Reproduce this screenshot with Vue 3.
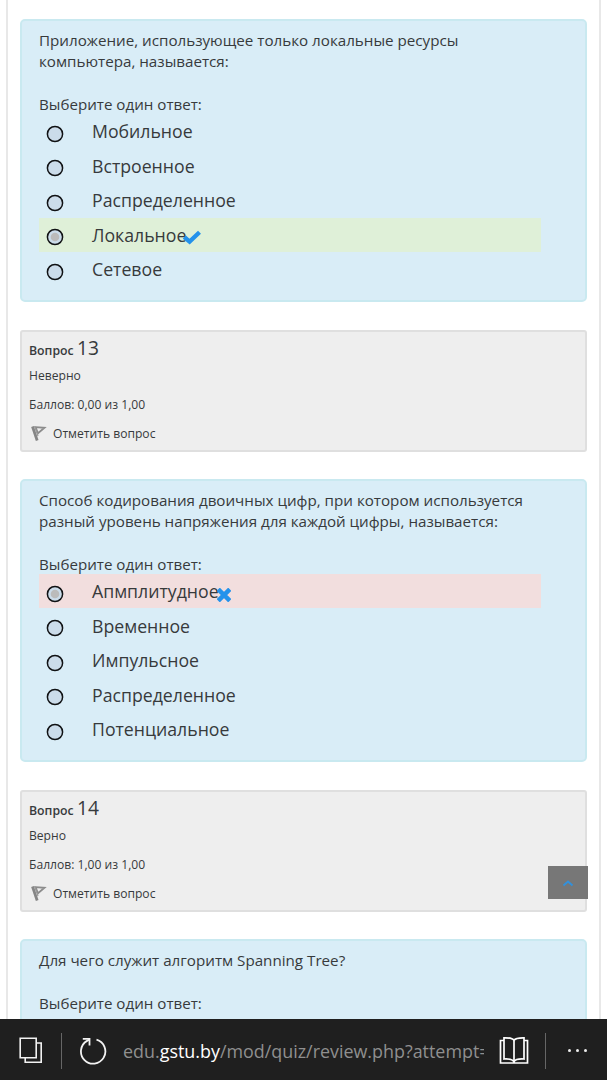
<script setup>
const blocks = [
  {
    id: 12,
    lines: ['Приложение, использующее только локальные ресурсы', 'компьютера, называется:'],
    options: [
      { text: 'Мобильное' },
      { text: 'Встроенное' },
      { text: 'Распределенное' },
      { text: 'Локальное', state: 'correct' },
      { text: 'Сетевое' },
    ],
  },
  {
    id: 13,
    info: { result: 'Неверно', grade: 'Баллов: 0,00 из 1,00' },
    lines: ['Способ кодирования двоичных цифр, при котором используется', 'разный уровень напряжения для каждой цифры, называется:'],
    options: [
      { text: 'Апмплитудное', state: 'incorrect' },
      { text: 'Временное' },
      { text: 'Импульсное' },
      { text: 'Распределенное' },
      { text: 'Потенциальное' },
    ],
  },
  {
    id: 14,
    info: { result: 'Верно', grade: 'Баллов: 1,00 из 1,00' },
    lines: ['Для чего служит алгоритм Spanning Tree?'],
    options: [],
  },
]
</script>

<template>
  <div class="screen">
    <main class="page">
      <template v-for="b in blocks" :key="b.id">
        <section v-if="b.info" class="info">
          <h3 class="number">Вопрос <span>{{ b.id }}</span></h3>
          <div class="result">{{ b.info.result }}</div>
          <div class="grade">{{ b.info.grade }}</div>
          <div class="flag">
            <svg width="16" height="17" viewBox="0 0 16 17" fill="none">
              <path d="M1.5 1.5 6.2 15.5" stroke="#858585" stroke-width="2.8" />
              <path d="M4.5 2.1 13.500 2.800 7 8.300Z" stroke="#8c8c8c" stroke-width="1.8" />
              <path d="M3.6 1.5 7 11" stroke="#999" stroke-width="1.2" />
            </svg>
            <span>Отметить вопрос</span>
          </div>
        </section>
        <section class="question">
          <p class="stem"><span v-for="l in b.lines" :key="l">{{ l }}</span></p>
          <div class="prompt">Выберите один ответ:</div>
          <div v-for="o in b.options" :key="o.text" class="option" :class="o.state">
            <svg class="radio" width="18" height="18" viewBox="0 0 18 18">
              <circle cx="9" cy="9" r="7.600" fill="#cbdcea" stroke="#101214" stroke-width="1.500" />
              <circle v-if="o.state" cx="9" cy="9" r="4.300" fill="#bbb" />
            </svg>
            <span class="label">{{ o.text }}</span>
            <svg v-if="o.state === 'correct'" class="mark check" width="20" height="15" viewBox="0 0 20 15">
              <path d="M2.200 7 7.600 11.600 17.500 2.200" fill="none" stroke="#2492eb" stroke-width="4.300" />
            </svg>
            <svg v-if="o.state === 'incorrect'" class="mark cross" width="14" height="14" viewBox="0 0 14 14">
              <path d="M2.800 2.800 11.200 11.200M11.200 2.800 2.800 11.200" fill="none" stroke="#2492eb" stroke-width="4.500" stroke-linecap="square" />
            </svg>
          </div>
        </section>
      </template>
    </main>

    <div class="to-top">
      <svg width="12" height="8" viewBox="0 0 12 8"><path d="M1.500 6.500 6 2.500 10.500 6.500" fill="none" stroke="#3290db" stroke-width="2" /></svg>
    </div>

    <footer class="bar">
      <svg class="tabs" width="24" height="27" viewBox="0 0 24 27" fill="none" stroke="#f2f2f2" stroke-width="1.600">
        <path d="M1.200 1.200H17.200V20.700H1.200Z" />
        <path d="M17.200 6H22.200V25.200H6.200V20.700" />
      </svg>
      <i class="divider"></i>
      <svg class="reload" width="28" height="28" viewBox="0 0 28 28" fill="none" stroke="#f2f2f2" stroke-width="1.800">
        <path d="M17.500 2.700A12.200 12.200 0 1 1 8 3.900L10.400 2.500" />
        <path d="M3.800 1.900H10.500V8.600" />
      </svg>
      <div class="url">edu.<b>gstu.by</b>/mod/quiz/review.php?attempt=</div>
      <svg class="book" width="30" height="29" viewBox="0 0 30 29" fill="none" stroke="#fff" stroke-width="1.700">
        <path d="M15 4.200C13.500 2 10 1.700 5 1.800V23C10 22.700 13.500 23.200 15 25.500C16.500 23.200 20 22.700 25 23V1.800C20 1.700 16.500 2 15 4.200Z" />
        <path d="M15 4.200V27M5 4.500H1.500V27H28.500V4.500H25" />
      </svg>
      <i class="divider second"></i>
      <div class="more"><i></i><i></i><i></i></div>
    </footer>
  </div>
</template>

<style>
html, body { margin: 0; overflow: hidden; background: #fff; }
</style>

<style scoped>
* { box-sizing: border-box; }
.screen {
  position: relative;
  width: 607px;
  height: 1080px;
  overflow: hidden;
  display: flex;
  flex-direction: column;
  background: #fff;
  font-family: "Open Sans", "Noto Sans", sans-serif;
  color: #373a3c;
}
.page {
  width: 595px;
  height: 1019px;
  flex: none;
  margin-left: 6px;
  padding: 19px 12px 0;
  overflow: hidden;
  border: solid #e8e8e8;
  border-width: 0 2px;
}
.question {
  height: 283.400px;
  margin-bottom: 27.700px;
  padding: 9.400px 17px 0;
  border: 2px solid #c9e9f0;
  border-radius: 5px;
  background: #d9edf7;
}
.stem { margin: 0 0 22.500px; font-size: 15.180px; line-height: 20.400px; }
.stem span { display: block; white-space: nowrap; }
.prompt { height: 20.300px; font-size: 15.150px; line-height: 20.400px; }
.option {
  display: flex;
  align-items: center;
  width: 502px;
  height: 34.500px;
  padding-left: 7px;
}
.option.correct { background: #dff0d8; }
.option.incorrect { background: #f2dede; }
.radio { flex: none; margin: 5px 28px 0 0; }
.label { font-size: 17.700px; line-height: 34px; }
.mark { flex: none; }
.check { margin: 6px 0 0 -4.500px; }
.cross { margin: 7px 0 0 -1.700px; }
.info {
  height: 121.500px;
  margin-bottom: 27.400px;
  padding: 2.700px 7px 0;
  border: 2px solid #dfdfdf;
  border-radius: 3px;
  background: #eee;
  font-size: 12.120px;
}
.number { margin: 0; font-size: 12.300px; line-height: 26px; font-weight: 600; }
.number span { font-size: 19.200px; font-weight: 400; }
.result { margin-top: 2px; line-height: 20px; }
.grade { margin-top: 9px; line-height: 20px; }
.flag { display: flex; align-items: center; gap: 6px; height: 20px; margin-top: 8.500px; padding-left: 2px; }
.to-top {
  position: absolute;
  left: 548px;
  top: 866px;
  width: 40px;
  height: 33px;
  display: flex;
  align-items: center;
  justify-content: center;
  padding-top: 1px;
  background: #777;
}
.bar {
  flex: none;
  display: flex;
  align-items: center;
  height: 61px;
  padding: 2px 0 0 19px;
  background: #1f1f1f;
}
.divider { width: 1px; height: 36px; margin-left: 18px; background: #666; }
.reload { margin-left: 16.500px; }
.url {
  width: 360.500px;
  margin-left: 16.500px;
  overflow: hidden;
  white-space: nowrap;
  font-size: 17.900px;
  line-height: 30px;
  color: #8f8f8f;
}
.url b { font-weight: 400; color: #fff; }
.book { margin-left: 15px; }
.divider.second { margin-left: 16px; }
.more { display: flex; gap: 5px; margin-left: 22px; }
.more i { width: 3px; height: 3px; border-radius: 50%; background: #eee; }
.tabs, .reload, .book, .divider, .more, .url { flex: none; }
</style>
